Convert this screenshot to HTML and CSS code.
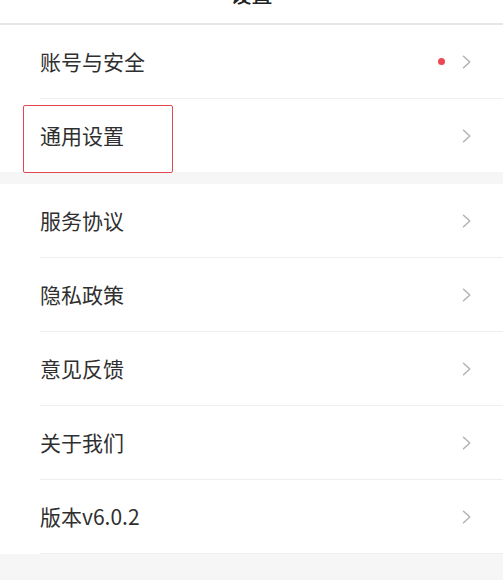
FILE: index.html
```html
<!DOCTYPE html>
<html lang="zh-CN">
<head>
<meta charset="utf-8">
<title>设置</title>
<link rel="stylesheet" href="styles.css">
</head>
<body>
<header class="header"><h1 class="title">设置</h1></header>
<section class="group">
  <div class="row">
    <div class="row-inner">
      <span class="label">账号与安全</span>
      <span class="dot"></span>
      <svg class="chev" viewBox="0 0 10 14" width="10" height="14"><path d="M1.5 1.2 L7.8 7 L1.5 12.8"/></svg>
    </div>
  </div>
  <div class="row row-marked">
    <div class="row-inner">
      <span class="label">通用设置</span>
      <svg class="chev" viewBox="0 0 10 14" width="10" height="14"><path d="M1.5 1.2 L7.8 7 L1.5 12.8"/></svg>
    </div>
    <div class="mark"></div>
  </div>
</section>
<section class="group">
  <div class="row"><div class="row-inner"><span class="label">服务协议</span><svg class="chev" viewBox="0 0 10 14" width="10" height="14"><path d="M1.5 1.2 L7.8 7 L1.5 12.8"/></svg></div></div>
  <div class="row"><div class="row-inner"><span class="label">隐私政策</span><svg class="chev" viewBox="0 0 10 14" width="10" height="14"><path d="M1.5 1.2 L7.8 7 L1.5 12.8"/></svg></div></div>
  <div class="row"><div class="row-inner"><span class="label">意见反馈</span><svg class="chev" viewBox="0 0 10 14" width="10" height="14"><path d="M1.5 1.2 L7.8 7 L1.5 12.8"/></svg></div></div>
  <div class="row"><div class="row-inner"><span class="label">关于我们</span><svg class="chev" viewBox="0 0 10 14" width="10" height="14"><path d="M1.5 1.2 L7.8 7 L1.5 12.8"/></svg></div></div>
  <div class="row"><div class="row-inner"><span class="label">版本v6.0.2</span><svg class="chev" viewBox="0 0 10 14" width="10" height="14"><path d="M1.5 1.2 L7.8 7 L1.5 12.8"/></svg></div></div>
</section>
</body>
</html>
```
FILE: styles.css
```css
* { box-sizing: border-box; }
html, body { margin: 0; padding: 0; }
body {
  background: #f6f6f6;
  font-family: "Noto Sans CJK SC", "Noto Sans", sans-serif;
  color: #2f2f2f;
  height: 580px;
  overflow: hidden;
}
.header {
  height: 25px;
  background: #fff;
  border-bottom: 2px solid #e6e6e6;
  display: flex;
  justify-content: center;
  overflow: hidden;
}
.title {
  margin: -17px 0 0 0;
  font-size: 21px;
  line-height: 21px;
  font-weight: 500;
  color: #222;
}
.group {
  background: #fff;
  margin-bottom: 12px;
}
.row {
  height: 74px;
  padding-left: 40px;
  display: flex;
}
.row-inner {
  flex: 1;
  display: flex;
  align-items: center;
  padding-right: 31px;
  border-bottom: 1px solid #eeeeee;
}
.group:first-of-type .row:last-child { height: 73px; }
.group:first-of-type .row:last-child .row-inner { border-bottom: none; }
.label {
  flex: 1;
  font-size: 21px;
  line-height: 1;
  padding-bottom: 1px;
}
.dot {
  width: 7px;
  height: 7px;
  border-radius: 50%;
  background: #e94852;
  margin-right: 17px;
}
.chev {
  display: block;
  fill: none;
  stroke: #b3b3b3;
  stroke-width: 1.5;
  stroke-linecap: round;
  stroke-linejoin: round;
}
.row-marked { position: relative; }
.mark {
  position: absolute;
  left: 23px;
  top: 6px;
  width: 150px;
  height: 68px;
  border: 1.5px solid #e2474f;
  border-radius: 2px;
}
```
